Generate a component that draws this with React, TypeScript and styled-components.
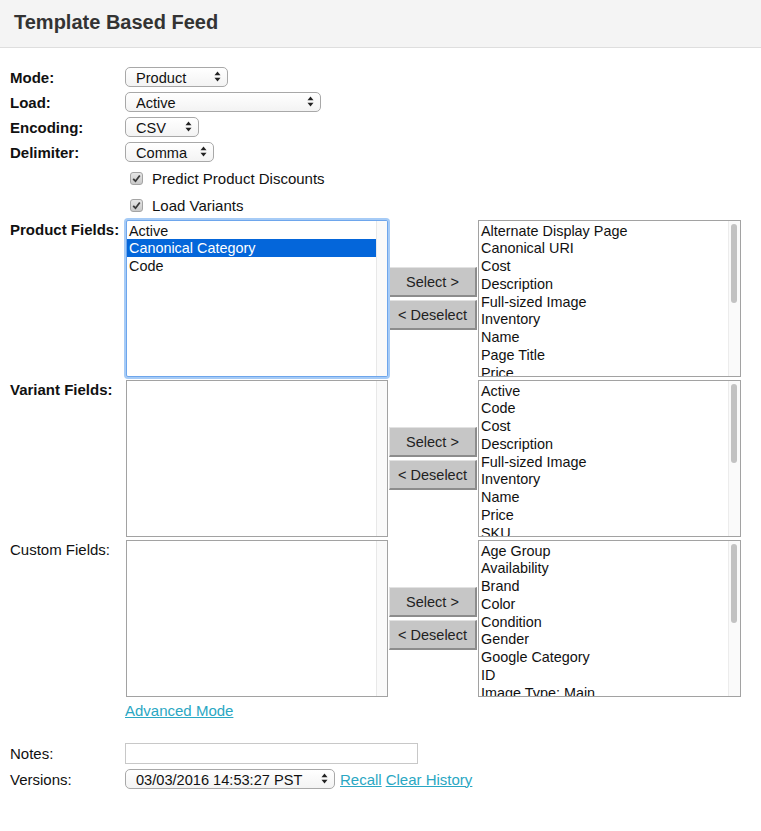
import React from 'react';
import styled, {createGlobalStyle} from 'styled-components';

const GlobalStyle = createGlobalStyle`
    html, body {
        margin: 0;
        padding: 0;
        background: #fff;
        font-family: "Liberation Sans", Arial, Helvetica, sans-serif;
        color: #111;
    }
    * {
        box-sizing: border-box;
    }
`;

type FieldList = {
    label: string
    bold: boolean
    chosen: string[]
    selectedIndex?: number
    focused?: boolean
    available: string[]
}

const fieldLists: FieldList[] = [
    {
        label: 'Product Fields:',
        bold: true,
        chosen: ['Active', 'Canonical Category', 'Code'],
        selectedIndex: 1,
        focused: true,
        available: ['Alternate Display Page', 'Canonical URI', 'Cost', 'Description', 'Full-sized Image', 'Inventory', 'Name', 'Page Title', 'Price'],
    },
    {
        label: 'Variant Fields:',
        bold: true,
        chosen: [],
        available: ['Active', 'Code', 'Cost', 'Description', 'Full-sized Image', 'Inventory', 'Name', 'Price', 'SKU'],
    },
    {
        label: 'Custom Fields:',
        bold: false,
        chosen: [],
        available: ['Age Group', 'Availability', 'Brand', 'Color', 'Condition', 'Gender', 'Google Category', 'ID', 'Image Type: Main'],
    },
];

const Arrows = () => (
    <ArrowIcon width="7" height="11" viewBox="0 0 7 11">
        <path d="M3.5 0.5 L6.5 4.2 L0.5 4.2 Z" fill="#222"/>
        <path d="M3.5 10.5 L6.5 6.8 L0.5 6.8 Z" fill="#222"/>
    </ArrowIcon>
);

type SelectProps = {
    width: number
    value: string
}

const Select = ({width, value}: SelectProps) => (
    <SelectBox $width={width}>
        <NativeSelect defaultValue={value}>
            <option>{value}</option>
        </NativeSelect>
        <Arrows/>
    </SelectBox>
);

const Check = ({label}: { label: string }) => (
    <CheckRow>
        <CheckBox>
            <svg width="9" height="9" viewBox="0 0 9 9">
                <path d="M1.2 4.8 L3.5 7.2 L7.8 1.5" stroke="#3a3a3a" strokeWidth="1.8" fill="none"/>
            </svg>
        </CheckBox>
        <CheckText>{label}</CheckText>
    </CheckRow>
);

export default function App() {
    return (
        <>
            <GlobalStyle/>
            <Header>
                <Title>Template Based Feed</Title>
            </Header>
            <Form>
                <Row>
                    <Label $bold>Mode:</Label>
                    <Select width={103} value="Product"/>
                </Row>
                <Row>
                    <Label $bold>Load:</Label>
                    <Select width={196} value="Active"/>
                </Row>
                <Row>
                    <Label $bold>Encoding:</Label>
                    <Select width={74} value="CSV"/>
                </Row>
                <Row>
                    <Label $bold>Delimiter:</Label>
                    <Select width={89} value="Comma"/>
                </Row>
                <Checks>
                    <Check label="Predict Product Discounts"/>
                    <Check label="Load Variants"/>
                </Checks>
                <Lists>
                    {fieldLists.map((list) => (
                        <ListRow key={list.label}>
                            <ListLabel $bold={list.bold}>{list.label}</ListLabel>
                            <ListBox $width={262} $focused={list.focused}>
                                <Items>
                                    {list.chosen.map((item, i) => (
                                        <Item key={item} $selected={i === list.selectedIndex}>{item}</Item>
                                    ))}
                                </Items>
                                <Track/>
                            </ListBox>
                            <Buttons>
                                <MoveButton>Select &gt;</MoveButton>
                                <MoveButton>&lt; Deselect</MoveButton>
                            </Buttons>
                            <ListBox $width={263}>
                                <Items>
                                    {list.available.map((item) => (
                                        <Item key={item}>{item}</Item>
                                    ))}
                                </Items>
                                <ScrollBar>
                                    <Thumb/>
                                </ScrollBar>
                            </ListBox>
                        </ListRow>
                    ))}
                </Lists>
                <AdvancedRow>
                    <Link href="#">Advanced Mode</Link>
                </AdvancedRow>
                <Row>
                    <Label>Notes:</Label>
                    <NotesInput type="text"/>
                </Row>
                <Row>
                    <Label>Versions:</Label>
                    <Select width={210} value="03/03/2016 14:53:27 PST"/>
                    <Links>
                        <Link href="#">Recall</Link>
                        <Link href="#">Clear History</Link>
                    </Links>
                </Row>
            </Form>
        </>
    );
}

const Header = styled.div`
    height: 48px;
    background: #f4f4f4;
    border-bottom: 1px solid #dedede;
    display: flex;
    align-items: center;
    padding: 0 14px 2px;
`;

const Title = styled.h1`
    margin: 0;
    font-size: 20px;
    font-weight: 700;
    color: #333;
`;

const Form = styled.div`
    padding: 19px 10px 0;
    display: flex;
    flex-direction: column;
    gap: 5px;
`;

const Row = styled.div`
    display: flex;
    align-items: center;
    min-height: 20px;
`;

const Label = styled.div<{ $bold?: boolean }>`
    width: 115px;
    flex-shrink: 0;
    font-size: 15px;
    font-weight: ${(p) => (p.$bold ? 700 : 400)};
    color: #111;
    white-space: nowrap;
`;

const SelectBox = styled.span<{ $width: number }>`
    position: relative;
    display: inline-flex;
    width: ${(p) => p.$width}px;
    height: 20px;
`;

const NativeSelect = styled.select`
    appearance: none;
    width: 100%;
    height: 100%;
    margin: 0;
    padding: 1px 20px 0 10px;
    border: 1px solid #a8a8a8;
    border-radius: 5px;
    background: linear-gradient(#ffffff, #f3f3f3);
    font-family: "Liberation Sans", Arial, sans-serif;
    font-size: 14.6px;
    color: #111;
    outline: none;
`;

const ArrowIcon = styled.svg`
    position: absolute;
    right: 7px;
    top: 4px;
    pointer-events: none;
`;

const Checks = styled.div`
    display: flex;
    flex-direction: column;
    gap: 7px;
    padding: 1px 0 0 120px;
`;

const CheckRow = styled.label`
    display: flex;
    align-items: center;
    height: 20px;
    gap: 9px;
`;

const CheckBox = styled.span`
    width: 13px;
    height: 13px;
    border: 1px solid #a4a4a4;
    border-radius: 3px;
    background: linear-gradient(#e6e6e6, #c9c9c9);
    display: flex;
    align-items: center;
    justify-content: center;
`;

const CheckText = styled.span`
    font-size: 15px;
    color: #111;
`;

const Lists = styled.div`
    display: flex;
    flex-direction: column;
    gap: 3px;
`;

const ListRow = styled.div`
    display: flex;
    align-items: center;
    height: 157px;
`;

const ListLabel = styled(Label)`
    align-self: flex-start;
    width: 116px;
    padding-top: 1px;
`;

const ListBox = styled.div<{ $width: number; $focused?: boolean }>`
    width: ${(p) => p.$width}px;
    height: 157px;
    display: flex;
    overflow: hidden;
    background: #fff;
    border: 1px solid ${(p) => (p.$focused ? '#6ea6ec' : '#a2a2a2')};
    box-shadow: ${(p) => (p.$focused ? '0 0 0 2px #a6cbf6' : 'none')};
    border-radius: ${(p) => (p.$focused ? '2px' : '0')};
    position: relative;
    z-index: ${(p) => (p.$focused ? 1 : 0)};
`;

const Items = styled.div`
    flex: 1;
    display: flex;
    flex-direction: column;
    padding-top: 0.5px;
`;

const Item = styled.div<{ $selected?: boolean }>`
    flex-shrink: 0;
    height: 17.8px;
    line-height: 18.6px;
    padding-left: 2px;
    font-size: 14.4px;
    white-space: nowrap;
    color: ${(p) => (p.$selected ? '#fff' : '#111')};
    background: ${(p) => (p.$selected ? '#0466da' : 'transparent')};
`;

const Track = styled.div`
    width: 11px;
    flex-shrink: 0;
    background: #fafafa;
    border-left: 1px solid #e8e8e8;
`;

const ScrollBar = styled.div`
    width: 12px;
    flex-shrink: 0;
    background: #fafafa;
    border-left: 1px solid #ececec;
    padding: 3px 3px 0 2px;
`;

const Thumb = styled.div`
    width: 6px;
    height: 79px;
    border-radius: 3px;
    background: #c2c2c2;
`;

const Buttons = styled.div`
    width: 90px;
    display: flex;
    flex-direction: column;
    gap: 3px;
    padding: 0 1px;
`;

const MoveButton = styled.button`
    width: 88px;
    height: 30px;
    margin: 0;
    padding: 0;
    font-family: "Liberation Sans", Arial, sans-serif;
    font-size: 14.5px;
    color: #222;
    background: #c6c6c6;
    border-style: solid;
    border-width: 1px 2px 2px 1px;
    border-color: #e2e2e2 #8c8c8c #8c8c8c #e2e2e2;
    cursor: pointer;
`;

const AdvancedRow = styled.div`
    padding: 0 0 0 115px;
    height: 20px;
    display: flex;
    align-items: center;
    margin-top: -2px;
    margin-bottom: 18px;
`;

const Link = styled.a`
    font-size: 15px;
    color: #2aa7c3;
    text-decoration: underline;
`;

const NotesInput = styled.input`
    width: 293px;
    height: 21px;
    margin: 0;
    border: 1px solid #c8c8c8;
    font-size: 13px;
    outline: none;
`;

const Links = styled.div`
    display: flex;
    gap: 4px;
    margin-left: 5px;
`;
